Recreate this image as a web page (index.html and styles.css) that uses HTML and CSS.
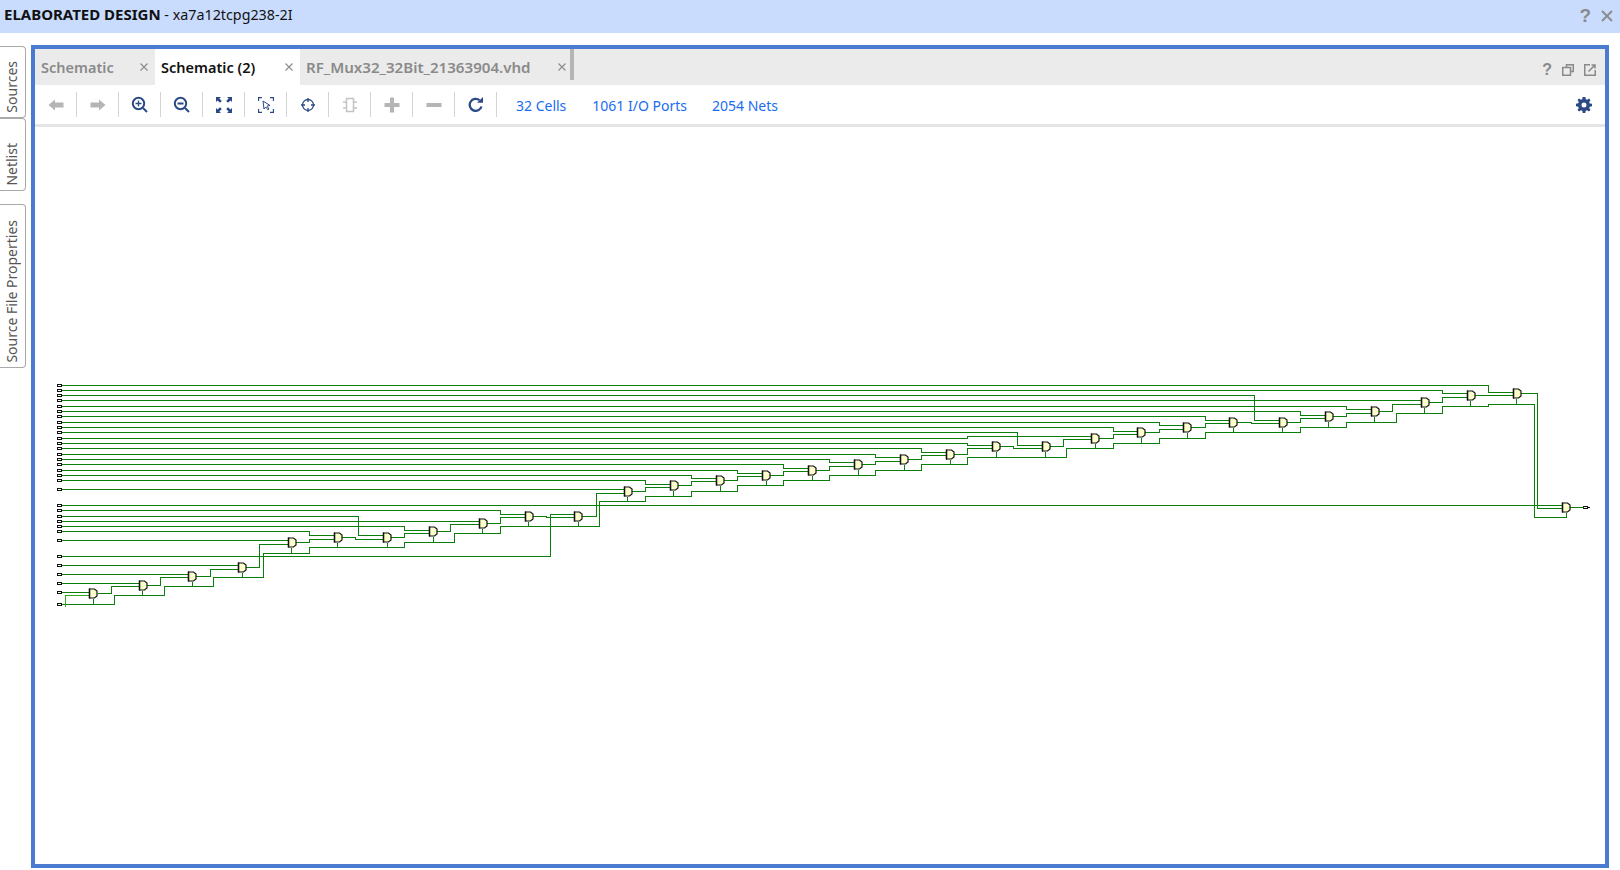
FILE: index.html
```html
<!DOCTYPE html>
<html lang="en">
  <head>
    <meta charset="UTF-8" />
    <title>Elaborated Design</title>
    <link rel="stylesheet" href="styles.css">
  </head>
  <body>
    <header class="titlebar">
      <span class="title"><b>ELABORATED DESIGN</b> - xa7a12tcpg238-2I</span>
      <span class="title-help">?</span>
      <svg class="title-close" width="12" height="12" viewBox="0 0 12 12"><path d="M1 1L11 11M11 1L1 11" /></svg>
    </header>

    <div class="main">
      <nav class="side-tabs">
        <div class="side-tab sources"><span>Sources</span></div>
        <div class="side-tab netlist"><span>Netlist</span></div>
        <div class="side-tab props"><span>Source File Properties</span></div>
      </nav>

      <section class="panel">
        <div class="tabstrip">
          <div class="tab first">
            <span class="tab-name">Schematic</span>
            <svg class="tab-close" width="8" height="8" viewBox="0 0 8 8"><path d="M0.5 0.5L7.5 7.5M7.5 0.5L0.5 7.5" /></svg>
          </div>
          <div class="tab second active">
            <span class="tab-name">Schematic (2)</span>
            <svg class="tab-close" width="8" height="8" viewBox="0 0 8 8"><path d="M0.5 0.5L7.5 7.5M7.5 0.5L0.5 7.5" /></svg>
          </div>
          <div class="tab third">
            <span class="tab-name">RF_Mux32_32Bit_21363904.vhd</span>
            <svg class="tab-close" width="8" height="8" viewBox="0 0 8 8"><path d="M0.5 0.5L7.5 7.5M7.5 0.5L0.5 7.5" /></svg>
          </div>
          <div class="tab-end"></div>
          <div class="panel-actions">
            <span class="panel-help">?</span>
            <svg width="12" height="12" viewBox="0 0 12 12" class="panel-icon"><path d="M4.500 3V0.750H11.250V7.500H9" /><path d="M0.750 3.500H8.500V11.250H0.750Z" /></svg>
            <svg width="12" height="12" viewBox="0 0 12 12" class="panel-icon"><path d="M6 0.750H0.750V11.250H11.250V6" /><path d="M4.500 7.500L10.500 1.500M7.500 1H11V4.500" /></svg>
          </div>
        </div>

        <div class="toolbar">
          <button class="tool">
            <svg width="18" height="14" viewBox="0 0 18 14"><path class="off" d="M1.500 7L8 1.500V4.500H16.500V9.500H8V12.500Z" /></svg>
          </button>
          <button class="tool">
            <svg width="18" height="14" viewBox="0 0 18 14"><path class="off" d="M16.500 7L10 1.500V4.500H1.500V9.500H10V12.500Z" /></svg>
          </button>
          <button class="tool">
            <svg width="18" height="18" viewBox="0 0 18 18"><circle class="line" cx="7.500" cy="7.500" r="5.700" /><path class="line thin" d="M7.500 4.500V10.500M4.500 7.500H10.500" /><path class="line" d="M12 12L16 16" /></svg>
          </button>
          <button class="tool">
            <svg width="18" height="18" viewBox="0 0 18 18"><circle class="line" cx="7.500" cy="7.500" r="5.700" /><path class="line" d="M4.500 7.500H10.500M12 12L16 16" /></svg>
          </button>
          <button class="tool">
            <svg width="16" height="16" viewBox="0 0 16 16"><path class="solid" d="M0 0H5L3.400 1.600L5.800 4L4 5.800L1.600 3.400L0 5ZM16 0V5L14.400 3.400L12 5.800L10.200 4L12.600 1.600L11 0ZM0 16V11L1.600 12.600L4 10.200L5.800 12L3.400 14.400L5 16ZM16 16H11L12.600 14.400L10.200 12L12 10.200L14.400 12.600L16 11Z" /></svg>
          </button>
          <button class="tool">
            <svg width="16" height="16" viewBox="0 0 16 16"><path class="line thin" d="M0.500 4V0.500H4M12 0.500H15.500V4M0.500 12V15.500H4M12 15.500H15.500V12" /><path class="line hair" d="M5 4L12 8.500L9 9.200L11 12L9.800 12.800L7.800 10L6 12Z" /></svg>
          </button>
          <button class="tool">
            <svg width="16" height="16" viewBox="0 0 16 16"><circle class="line thin" cx="8" cy="8" r="5.500" /><path class="line thin" d="M8 1V5M8 11V15M1 8H5M11 8H15" /></svg>
          </button>
          <button class="tool">
            <svg width="16" height="16" viewBox="0 0 16 16"><path class="off-line" d="M4.500 1.500H11.500V14.500H4.500ZM1 5H4.500M1 11H4.500M11.500 5H15M11.500 11H15" /></svg>
          </button>
          <button class="tool">
            <svg width="16" height="16" viewBox="0 0 16 16"><path class="off" d="M6 0.500H10V6H15.500V10H10V15.500H6V10H0.500V6H6Z" /></svg>
          </button>
          <button class="tool">
            <svg width="16" height="16" viewBox="0 0 16 16"><path class="off" d="M0.500 6H15.500V10H0.500Z" /></svg>
          </button>
          <button class="tool">
            <svg width="16" height="16" viewBox="0 0 16 16"><path class="line heavy" d="M13.500 9.500A6 6 0 1 1 11.500 3.200" /><path class="solid" d="M9 5.800H15V0Z" /></svg>
          </button>
          <div class="stats">
            <a class="stat cells">32 Cells</a>
            <a class="stat ports">1061 I/O Ports</a>
            <a class="stat nets">2054 Nets</a>
          </div>
          <svg class="gear" width="16" height="16" viewBox="0 0 16 16"><path class="solid" fill-rule="evenodd" d="M6.600 0H9.400L9.800 2.200L11.300 2.800L13.100 1.500L14.500 3.200L13.200 5L13.800 6.400L16 6.700V9.300L13.800 9.700L13.200 11.100L14.500 12.900L12.900 14.500L11.100 13.200L9.700 13.800L9.300 16H6.700L6.300 13.800L4.900 13.200L3.100 14.500L1.500 12.900L2.800 11.100L2.200 9.700L0 9.300V6.700L2.200 6.300L2.800 4.900L1.500 3.100L3.100 1.500L4.900 2.800L6.300 2.200ZM8 5.500A2.500 2.500 0 1 0 8 10.500A2.500 2.500 0 1 0 8 5.500Z" /></svg>
        </div>

        <div class="canvas">
          <svg class="schematic" width="1570" height="737" viewBox="34.500 126.500 1570 737">
            <defs>
              <g id="mux">
                <path class="mux-body" d="M0 -4.500H5L7.500 -2.500V2.500L5 4.500H0Z" />
                <path class="mux-bar" d="M0 -5V5" />
              </g>
            </defs>
            <!-- top level ports -->
            <path class="port" d="M57 384h4v2h-4zM57 389h4v2h-4zM57 394h4v2h-4zM57 399h4v2h-4zM57 405h4v2h-4zM57 410h4v2h-4zM57 415h4v2h-4zM57 421h4v2h-4zM57 426h4v2h-4zM57 431h4v2h-4zM57 437h4v2h-4zM57 442h4v2h-4zM57 447h4v2h-4zM57 453h4v2h-4zM57 458h4v2h-4zM57 463h4v2h-4zM57 469h4v2h-4zM57 474h4v2h-4zM57 479h4v2h-4zM57 488h4v2h-4zM57 504h4v2h-4zM57 509h4v2h-4zM57 515h4v2h-4zM57 520h4v2h-4zM57 525h4v2h-4zM57 530h4v2h-4zM57 539h4v2h-4zM57 555h4v2h-4zM57 564h4v2h-4zM57 573h4v2h-4zM57 582h4v2h-4zM57 591h4v2h-4zM57 603h4v2h-4z" />
            <path class="port" d="M1583 506h3l2 1l-2 1h-3z" />
            <!-- input nets -->
            <path class="wire" d="M61 385H1488V392H1513M61 390H1442V393H1467M61 395H1254V420H1279M61 400H1421M61 406H1346V409H1371M61 411H1300V415H1325M61 416H1205V420H1229M61 422H1159V425H1183M61 427H1113V431H1137M61 432H1017V445H1042M61 438H967V436H1091M61 443H967V445H992M61 448H921V452H946M61 454H875V457H900M61 459H829V462H854M61 464H783V468H808M61 470H737V473H762M61 475H691V478H716M61 480H645V484H670M61 489H624M61 505H1562M61 510H500V514H525M61 516H358V535H383M61 521H479M61 526H404V530H429M61 531H309V535H334M61 540H288M61 556H550V514H574M61 565H238M61 574H188M61 583H139M61 592H89" />
            <!-- mux to mux nets -->
            <path class="wire" d="M97 593H111V586H139M146 585H160V577H188M195 576H210V569H238M245 567H259V544H288M295 542H309V539H334M341 537H355V539H383M390 537H404V533H429M436 531H450V524H479M486 523H500V517H525M532 516H546V517H574M581 516H596V493H624M631 491H645V487H670M677 485H691V481H716M723 480H737V476H762M769 475H783V471H808M815 470H829V466H854M861 464H875V461H900M907 459H921V455H946M953 454H967V448H992M999 446H1013V448H1042M1049 446H1063V439H1091M1098 438H1113V434H1137M1144 432H1159V429H1183M1190 427H1205V423H1229M1236 422H1251V423H1279M1286 422H1300V418H1325M1332 416H1346V413H1371M1378 411H1392V404H1421M1428 402H1442V397H1467M1474 395H1513M1520 393H1537V508H1562M1569 507H1583" />
            <!-- select bus -->
            <path class="wire" d="M61 604H114V595H164V586H213V577H263V553H309V547H404V542H454V533H500V526H599V501H645V496H691V491H737V485H783V480H829V475H875V470H921V464H967V457H1066V448H1113V443H1159V438H1205V432H1300V427H1346V422H1396V413H1442V406H1488V404H1534V517H1566V512" />
            <path class="wire" d="M93 598V604M142 590V595M192 581V586M242 572V577M291 547V553M337 542V547M387 542V547M433 536V542M482 528V533M528 521V526M578 521V526M627 496V501M673 490V496M720 485V491M766 480V485M812 475V480M858 469V475M904 464V470M950 459V464M996 451V457M1045 451V457M1095 443V448M1141 437V443M1187 432V438M1233 427V432M1282 427V432M1328 421V427M1374 416V422M1424 407V413M1470 400V406M1516 398V404" />
            <path class="wire-sel" d="M65 606V595H89" />
            <!-- muxes -->
            <use href="#mux" x="89" y="593" />
            <use href="#mux" x="139" y="585" />
            <use href="#mux" x="188" y="576" />
            <use href="#mux" x="238" y="567" />
            <use href="#mux" x="288" y="542" />
            <use href="#mux" x="334" y="537" />
            <use href="#mux" x="383" y="537" />
            <use href="#mux" x="429" y="531" />
            <use href="#mux" x="479" y="523" />
            <use href="#mux" x="525" y="516" />
            <use href="#mux" x="574" y="516" />
            <use href="#mux" x="624" y="491" />
            <use href="#mux" x="670" y="485" />
            <use href="#mux" x="716" y="480" />
            <use href="#mux" x="762" y="475" />
            <use href="#mux" x="808" y="470" />
            <use href="#mux" x="854" y="464" />
            <use href="#mux" x="900" y="459" />
            <use href="#mux" x="946" y="454" />
            <use href="#mux" x="992" y="446" />
            <use href="#mux" x="1042" y="446" />
            <use href="#mux" x="1091" y="438" />
            <use href="#mux" x="1137" y="432" />
            <use href="#mux" x="1183" y="427" />
            <use href="#mux" x="1229" y="422" />
            <use href="#mux" x="1279" y="422" />
            <use href="#mux" x="1325" y="416" />
            <use href="#mux" x="1371" y="411" />
            <use href="#mux" x="1421" y="402" />
            <use href="#mux" x="1467" y="395" />
            <use href="#mux" x="1513" y="393" />
            <use href="#mux" x="1562" y="507" />
          </svg>
        </div>
      </section>
    </div>
  </body>
</html>
```

FILE: styles.css
```css
body {
  margin: 0;
  height: 870px;
  overflow: hidden;
  background-color: white;
  font-family: "Noto Sans", sans-serif;
  font-size: 14px;
}

.titlebar {
  display: flex;
  align-items: center;
  height: 33px;
  padding: 0 7px 2px 4px;
  box-sizing: border-box;
  background-color: #c9dcfd;
  color: #111;
}
.title {
  flex: 1;
  margin-bottom: 4px;
  font-size: 14.3px;
}
.title b {
  font-size: 15px;
  font-weight: 700;
}
.title-help {
  font-family: "Liberation Sans", sans-serif;
  font-size: 19px;
  font-weight: 700;
  color: #8a8a8a;
  margin-right: 10px;
}
.title-close path {
  stroke: #8a8a8a;
  stroke-width: 1.8;
  fill: none;
}

.main {
  display: flex;
  height: 823px;
  margin-top: 12px;
}

.side-tabs {
  width: 31px;
  flex: none;
}
.side-tab {
  display: flex;
  align-items: center;
  justify-content: flex-end;
  flex-direction: column;
  width: 26px;
  padding: 0 3px 4px 0;
  box-sizing: border-box;
  border: 1px solid #aaa;
  border-left: none;
  border-radius: 0 4px 4px 0;
  background-color: white;
  color: #555;
}
.side-tab span {
  writing-mode: vertical-rl;
  transform: rotate(180deg);
}
.sources {
  height: 72px;
  margin-top: 1px;
}
.netlist {
  height: 73px;
}
.props {
  height: 164px;
  margin-top: 13px;
}

.panel {
  display: flex;
  flex-direction: column;
  width: 1578px;
  height: 823px;
  box-sizing: border-box;
  border: 4px solid #4a7bd0;
}

.tabstrip {
  display: flex;
  height: 36px;
  background-color: #ebebeb;
}
.tab {
  display: flex;
  align-items: center;
  justify-content: space-between;
  box-sizing: border-box;
  font-size: 14.5px;
  font-weight: 600;
  color: #8a8a8a;
}
.tab.first {
  width: 120px;
  padding: 0 7px 0 6px;
}
.tab.second {
  width: 145px;
  padding: 0 7px 0 6px;
}
.tab.third {
  width: 270px;
  padding: 0 4px 0 6px;
  font-size: 15.1px;
}
.tab.active {
  background-color: white;
  color: #111;
}
.tab-close path {
  stroke: #8a8a8a;
  stroke-width: 1.1;
  fill: none;
}
.tab-end {
  width: 4px;
  height: 31px;
  background-color: #b5b5b5;
}
.panel-actions {
  display: flex;
  align-items: center;
  gap: 10px;
  margin-left: auto;
  padding: 5px 9px 0 0;
}
.panel-help {
  font-family: "Liberation Sans", sans-serif;
  font-size: 16px;
  font-weight: 700;
  color: #8a8a8a;
}
.panel-icon path {
  stroke: #8a8a8a;
  stroke-width: 1.5;
  fill: none;
}

.toolbar {
  display: flex;
  align-items: center;
  height: 42px;
  box-sizing: border-box;
  border-bottom: 3px solid #e4e4e4;
  background-color: white;
}
.tool {
  display: flex;
  align-items: center;
  justify-content: center;
  width: 42px;
  height: 25px;
  padding: 0;
  border: none;
  border-right: 1px solid #d4d4d4;
  background: none;
}
.off {
  fill: #b5b5b5;
}
.off-line {
  fill: none;
  stroke: #c4c4c4;
  stroke-width: 1.5;
}
.line {
  fill: none;
  stroke: #2b4a85;
  stroke-width: 2;
}
.line.thin {
  stroke-width: 1.3;
}
.line.hair {
  stroke-width: 1;
}
.line.heavy {
  stroke-width: 2.3;
}
.solid {
  fill: #2b4a85;
}
.stats {
  display: flex;
  flex: 1;
  padding-top: 2px;
  color: #1a6cf0;
}
.cells {
  margin-left: 19px;
}
.ports {
  margin-left: 26px;
}
.nets {
  margin-left: 25px;
}
.gear {
  margin-right: 13px;
}

.canvas {
  flex: 1;
  background-color: white;
}
.schematic {
  display: block;
}
.wire {
  fill: none;
  stroke: #0a800a;
  stroke-width: 1;
  shape-rendering: crispEdges;
}
.wire-sel {
  fill: none;
  stroke: #33a822;
  stroke-width: 1;
  shape-rendering: crispEdges;
}
.port {
  fill: white;
  stroke: #111;
  stroke-width: 1;
  shape-rendering: crispEdges;
}
.mux-body {
  fill: #ffffcc;
  stroke: #111;
  stroke-width: 1.2;
}
.mux-bar {
  fill: none;
  stroke: #111;
  stroke-width: 1.4;
}
```
